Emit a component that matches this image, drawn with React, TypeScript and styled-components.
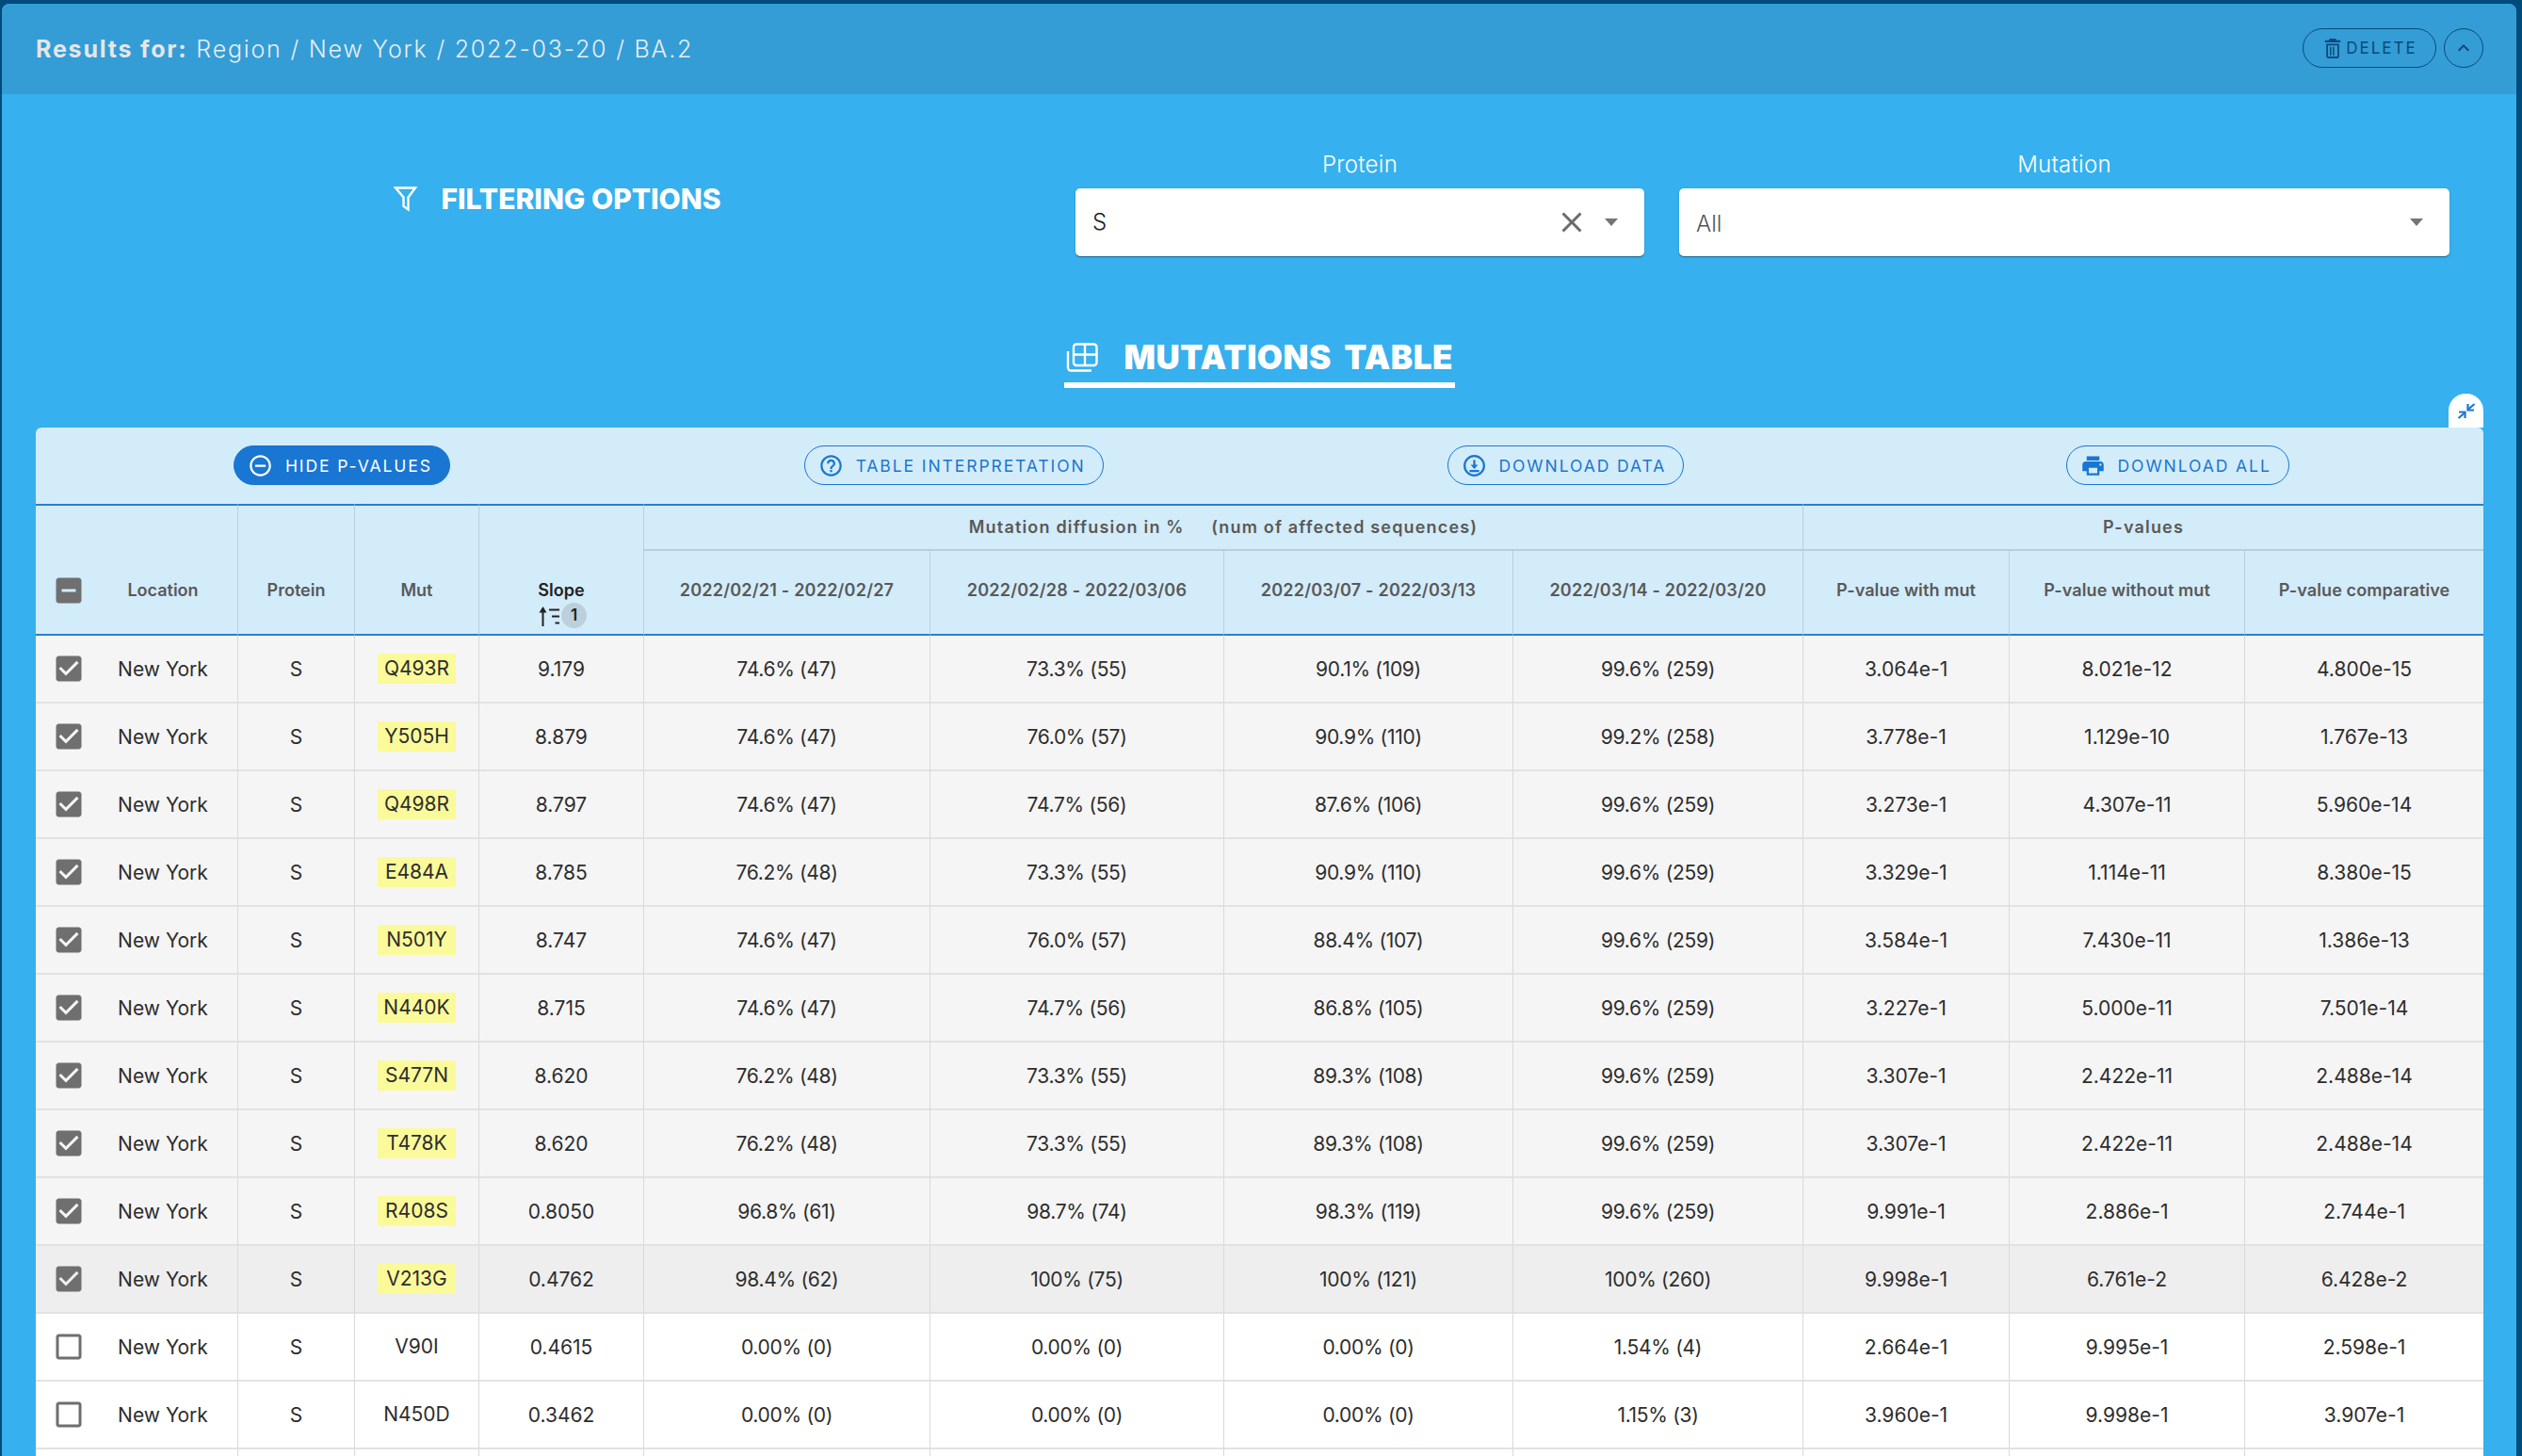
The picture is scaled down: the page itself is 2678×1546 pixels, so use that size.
import React from "react";
import styled, { createGlobalStyle } from "styled-components";

const Global = createGlobalStyle`
  html, body { margin: 0; padding: 0; height: 1546px; overflow: hidden; background: #014a7c; }
  #root { height: 1546px; overflow: hidden; }
  * { box-sizing: border-box; }
`;

const Page = styled.div`
  height: 1546px;
  padding: 4px 6px 0 2px;
  background: #014a7c;
  font-family: Inter, "Liberation Sans", sans-serif;
  overflow: hidden;
`;
const Card = styled.section`
  background: #36b0ee;
  border-radius: 8px 8px 0 0;
  height: 1542px;
  overflow: hidden;
`;
const TopBar = styled.header`
  height: 96px;
  background: #349dd6;
  display: flex;
  align-items: center;
  justify-content: space-between;
  padding: 0 35px 0 36px;
`;
const ResultTitle = styled.div`
  font-size: 25px;
  font-weight: 300;
  letter-spacing: 1.8px;
  color: #e9eef1;
  b { font-weight: 700; color: #e6e6e6; }
`;
const TopActions = styled.div`
  display: flex;
  gap: 8px;
  margin-top: -2px;
`;
const DeleteButton = styled.button`
  width: 142px;
  height: 42px;
  border: 1px solid #0a4a78;
  border-radius: 21px;
  background: transparent;
  color: #0a4a78;
  font: 400 17px Inter, sans-serif;
  letter-spacing: 2px;
  display: flex;
  align-items: center;
  justify-content: center;
  gap: 4px;
  padding: 0 0 0 2px;
`;
const RoundButton = styled.button`
  width: 42px;
  height: 42px;
  border: 1px solid #0a4a78;
  border-radius: 50%;
  background: transparent;
  color: #0a4a78;
  display: flex;
  align-items: center;
  justify-content: center;
  padding: 0;
`;
const FilterRow = styled.div`
  display: flex;
  align-items: flex-start;
  padding: 60px 71px 0 36px;
`;
const FilterTitle = styled.div`
  flex: 0 0 1104px;
  height: 102px;
  display: flex;
  align-items: center;
  justify-content: center;
  gap: 24px;
  padding-left: 4px;
  color: #fff;
  font-size: 30px;
  font-weight: 800;
`;
const Field = styled.div<{ $w: number; $ml?: number }>`
  flex: 0 0 ${(p) => p.$w}px;
  margin-left: ${(p) => p.$ml ?? 0}px;
`;
const FieldLabel = styled.div`
  height: 40px;
  line-height: 30px;
  text-align: center;
  color: #fff;
  font-size: 24px;
  font-weight: 300;
  letter-spacing: 0.3px;
`;
const Select = styled.div`
  height: 72px;
  background: #fff;
  border-radius: 5px;
  box-shadow: 0 2px 1px -1px rgba(0,0,0,.2), 0 1px 1px rgba(0,0,0,.14), 0 1px 3px rgba(0,0,0,.12);
  display: flex;
  align-items: center;
  padding: 0 28px 0 18px;
  font-size: 24px;
  color: #6b6b6b;
`;
const SelectValue = styled.span<{ $muted?: boolean }>`
  flex: 1;
  font-weight: 300;
  color: ${(p) => (p.$muted ? "#555" : "#222")};
  margin-top: ${(p) => (p.$muted ? 2 : -2)}px;
`;
const Caret = styled.span<{ $ml?: number }>`
  width: 0;
  height: 0;
  border-left: 7.5px solid transparent;
  border-right: 7.5px solid transparent;
  border-top: 8px solid #757575;
  margin-left: ${(p) => p.$ml ?? 0}px;
`;
const Heading = styled.div`
  width: 415px;
  height: 52px;
  margin: 88px auto 42px;
  padding: 0 0 8px 2px;
  border-bottom: 6px solid #fff;
  display: flex;
  align-items: center;
  gap: 28px;
  color: #fff;
  font-size: 35px;
  font-weight: 900;
  letter-spacing: 0.5px;
  word-spacing: 6px;
  white-space: nowrap;
`;
const TableBox = styled.div`
  position: relative;
  margin: 0 35px 0 36px;
`;
const CollapseTab = styled.div`
  position: absolute;
  right: 0;
  top: -36px;
  width: 37px;
  height: 36px;
  background: #fff;
  border-radius: 18px 18px 0 0;
  color: #1976d2;
  display: flex;
  align-items: center;
  justify-content: center;
`;
const Toolbar = styled.div`
  height: 81px;
  background: #d3ecfa;
  border-radius: 6px 6px 0 0;
  display: grid;
  grid-template-columns: repeat(4, 1fr);
  align-items: center;
  justify-items: center;
  padding-bottom: 1px;
`;
const ToolButton = styled.button<{ $solid?: boolean }>`
  height: 42px;
  border-radius: 21px;
  border: 1px solid #1976d2;
  background: ${(p) => (p.$solid ? "#1976d2" : "transparent")};
  color: ${(p) => (p.$solid ? "#fff" : "#1976d2")};
  font: 400 17.5px Inter, sans-serif;
  letter-spacing: 1.92px;
  display: flex;
  align-items: center;
  gap: 13px;
  padding: 0 18px 0 14px;
  white-space: nowrap;
`;
const Table = styled.table`
  width: 2599px;
  table-layout: fixed;
  border-collapse: separate;
  border-spacing: 0;
`;
const Th = styled.th<{ $active?: boolean; $ls?: number }>`
  background: #d3ecfa;
  color: ${(p) => (p.$active ? "#222" : "#595959")};
  font-size: 18px;
  font-weight: 600;
  line-height: 24px;
  letter-spacing: ${(p) => p.$ls ?? 0}px;
  text-align: center;
  vertical-align: top;
  padding: 30px 0 0;
  border-right: 1px solid #b8cfde;
  &:last-child { border-right: 0; }
`;
const SpanTh = styled(Th)`
  padding-top: 78px;
  border-top: 2px solid #2a7fd0;
  border-bottom: 2px solid #2a7fd0;
`;
const GroupTh = styled(Th)`
  height: 50px;
  padding: 0;
  vertical-align: middle;
  border-top: 2px solid #2a7fd0;
  border-bottom: 2px solid #b8cfde;
  letter-spacing: 1.18px;
  white-space: pre;
`;
const SubTh = styled(Th)`
  height: 90px;
  padding-top: 30px;
  border-bottom: 2px solid #2a7fd0;
`;
const SelectTh = styled(SpanTh)`
  border-right: 0;
  text-align: left;
  padding: 72px 0 0 17px;
`;
const SortLine = styled.div`
  height: 27px;
  display: flex;
  align-items: center;
  justify-content: center;
  margin-top: 1px;
  padding-left: 2px;
`;
const SortBadge = styled.span`
  width: 27px;
  height: 27px;
  border-radius: 50%;
  background: #bcd0dc;
  font-size: 17px;
  line-height: 27px;
  color: #222;
  margin-left: 1px;
`;
const Row = styled.tr<{ $tone: "sel" | "hover" | "plain" }>`
  background: ${(p) => (p.$tone === "sel" ? "#f5f5f5" : p.$tone === "hover" ? "#eeeeee" : "#fff")};
`;
const Td = styled.td`
  height: 72px;
  padding: 0;
  text-align: center;
  vertical-align: middle;
  font-size: 21px;
  font-weight: 400;
  color: #2d2d2d;
  border-right: 1px solid #d9d9d9;
  border-bottom: 2px solid #e2e2e2;
  &:last-child { border-right: 0; }
`;
const PercentTd = styled(Td)`
  letter-spacing: -0.3px;
`;
const CheckTd = styled(Td)`
  border-right: 0;
  text-align: left;
  padding-left: 17px;
  line-height: 0;
`;
const Highlight = styled.span<{ $on: boolean }>`
  display: inline-block;
  min-width: 83px;
  height: 32px;
  line-height: 32px;
  background: ${(p) => (p.$on ? "#fbfa9a" : "transparent")};
`;

const Ico = ({ d, size = 24 }: { d: string; size?: number }) => (
  <svg width={size} height={size} viewBox="0 0 24 24" fill="currentColor" aria-hidden>
    <path d={d} />
  </svg>
);

const CHECKED = "M19 3H5c-1.11 0-2 .9-2 2v14c0 1.1.89 2 2 2h14c1.11 0 2-.89 2-2V5c0-1.1-.89-2-2-2zm-9 14l-5-5 1.41-1.41L10 14.17l7.59-7.59L19 8l-9 9z";
const BLANK = "M19 5v14H5V5h14m0-2H5c-1.1 0-2 .9-2 2v14c0 1.1.9 2 2 2h14c1.1 0 2-.9 2-2V5c0-1.1-.9-2-2-2z";
const INDET = "M19 3H5c-1.1 0-2 .9-2 2v14c0 1.1.9 2 2 2h14c1.1 0 2-.9 2-2V5c0-1.1-.9-2-2-2zm-2 10H7v-2h10v2z";
const CheckIcon = styled.span`
  display: inline-block;
  color: #6f6f6f;
  line-height: 0;
`;
const Check = ({ d }: { d: string }) => (
  <CheckIcon>
    <Ico d={d} size={36} />
  </CheckIcon>
);

const FunnelIcon = () => (
  <svg width="26" height="28" viewBox="0 0 26 28" fill="none" stroke="#fff" strokeWidth="2.4" aria-hidden>
    <path d="M2 2.500h21l-7.500 10v13l-5-3.500v-9.500z" />
  </svg>
);
const TableIcon = () => (
  <svg width="34" height="31" viewBox="0 0 34 31" fill="none" stroke="#fff" strokeWidth="2.4" aria-hidden>
    <rect x="8" y="1.500" width="24.500" height="22.500" rx="3" />
    <path d="M8 12.500h24.500M20 1.500v22.500" />
    <path d="M2 9v17.500a3 3 0 0 0 3 3h22" />
  </svg>
);
const DownloadIcon = () => (
  <svg width="27" height="27" viewBox="0 0 24 24" fill="none" stroke="currentColor" strokeWidth="2" aria-hidden>
    <circle cx="12" cy="12" r="9.200" />
    <path d="M12 6.500v7" />
    <path d="M8.500 11h7L12 15z" fill="currentColor" stroke="none" />
    <path d="M7.500 17h9" />
  </svg>
);
const SortIcon = () => (
  <svg width="24" height="24" viewBox="0 0 24 24" fill="none" stroke="#222" aria-hidden>
    <path d="M5.500 23V4" strokeWidth="2" />
    <path d="M1.500 8.500 5.500 2l4 6.500z" fill="#222" stroke="none" />
    <path d="M12 5.500h11" strokeWidth="2" />
    <path d="M15 12.500h8" strokeWidth="2" />
    <path d="M18.500 19.500h4.500" strokeWidth="2" />
  </svg>
);
const CollapseIcon = () => (
  <svg width="20" height="17" viewBox="0 0 20 17" fill="none" stroke="currentColor" strokeWidth="2.2" aria-hidden>
    <path d="M18.500 1 12 6.500" />
    <path d="M11.500 1v6.500H18" />
    <path d="M1.500 16 8 10.500" />
    <path d="M2 9.500h6.500V16" />
  </svg>
);

type R = [string, string, string[], string[], boolean, "sel" | "hover" | "plain"];
const rows: R[] = [
  ["Q493R", "9.179", ["74.6% (47)", "73.3% (55)", "90.1% (109)", "99.6% (259)"], ["3.064e-1", "8.021e-12", "4.800e-15"], true, "sel"],
  ["Y505H", "8.879", ["74.6% (47)", "76.0% (57)", "90.9% (110)", "99.2% (258)"], ["3.778e-1", "1.129e-10", "1.767e-13"], true, "sel"],
  ["Q498R", "8.797", ["74.6% (47)", "74.7% (56)", "87.6% (106)", "99.6% (259)"], ["3.273e-1", "4.307e-11", "5.960e-14"], true, "sel"],
  ["E484A", "8.785", ["76.2% (48)", "73.3% (55)", "90.9% (110)", "99.6% (259)"], ["3.329e-1", "1.114e-11", "8.380e-15"], true, "sel"],
  ["N501Y", "8.747", ["74.6% (47)", "76.0% (57)", "88.4% (107)", "99.6% (259)"], ["3.584e-1", "7.430e-11", "1.386e-13"], true, "sel"],
  ["N440K", "8.715", ["74.6% (47)", "74.7% (56)", "86.8% (105)", "99.6% (259)"], ["3.227e-1", "5.000e-11", "7.501e-14"], true, "sel"],
  ["S477N", "8.620", ["76.2% (48)", "73.3% (55)", "89.3% (108)", "99.6% (259)"], ["3.307e-1", "2.422e-11", "2.488e-14"], true, "sel"],
  ["T478K", "8.620", ["76.2% (48)", "73.3% (55)", "89.3% (108)", "99.6% (259)"], ["3.307e-1", "2.422e-11", "2.488e-14"], true, "sel"],
  ["R408S", "0.8050", ["96.8% (61)", "98.7% (74)", "98.3% (119)", "99.6% (259)"], ["9.991e-1", "2.886e-1", "2.744e-1"], true, "sel"],
  ["V213G", "0.4762", ["98.4% (62)", "100% (75)", "100% (121)", "100% (260)"], ["9.998e-1", "6.761e-2", "6.428e-2"], true, "hover"],
  ["V90I", "0.4615", ["0.00% (0)", "0.00% (0)", "0.00% (0)", "1.54% (4)"], ["2.664e-1", "9.995e-1", "2.598e-1"], false, "plain"],
  ["N450D", "0.3462", ["0.00% (0)", "0.00% (0)", "0.00% (0)", "1.15% (3)"], ["3.960e-1", "9.998e-1", "3.907e-1"], false, "plain"],
];
const widths = [56, 159, 124, 132, 175, 304, 312, 307, 308, 219, 250, 253];
const dates = ["2022/02/21 - 2022/02/27", "2022/02/28 - 2022/03/06", "2022/03/07 - 2022/03/13", "2022/03/14 - 2022/03/20"];
const pvalues = ["P-value with mut", "P-value without mut", "P-value comparative"];

export default function App() {
  return (
    <Page>
      <Global />
      <Card>
        <TopBar>
          <ResultTitle>
            <b>Results for:</b> Region / New York / 2022-03-20 / BA.2
          </ResultTitle>
          <TopActions>
            <DeleteButton>
              <svg width="20" height="22" viewBox="0 0 22 24" fill="currentColor" aria-hidden>
                <path d="M7.500 1h7l1 2H20v2.500H2V3h4.500zM3.500 7h15v15a2 2 0 0 1-2 2h-11a2 2 0 0 1-2-2zm2 2v13h11V9zm2.200 1.500h1.600v10H7.700zm3.500 0h1.600v10h-1.600z" />
              </svg>
              DELETE
            </DeleteButton>
            <RoundButton>
              <Ico size={24} d="M12 8l-6 6 1.410 1.410L12 10.830l4.590 4.580L18 14z" />
            </RoundButton>
          </TopActions>
        </TopBar>

        <FilterRow>
          <FilterTitle>
            <FunnelIcon />
            FILTERING OPTIONS
          </FilterTitle>
          <Field $w={604}>
            <FieldLabel>Protein</FieldLabel>
            <Select>
              <SelectValue>S</SelectValue>
              <Ico size={36} d="M19 6.410 17.590 5 12 10.590 6.410 5 5 6.410 10.590 12 5 17.590 6.410 19 12 13.410 17.590 19 19 17.590 13.410 12z" />
              <Caret $ml={17} />
            </Select>
          </Field>
          <Field $w={818} $ml={37}>
            <FieldLabel>Mutation</FieldLabel>
            <Select>
              <SelectValue $muted>All</SelectValue>
              <Caret />
            </Select>
          </Field>
        </FilterRow>

        <Heading>
          <TableIcon />
          MUTATIONS TABLE
        </Heading>

        <TableBox>
          <CollapseTab>
            <CollapseIcon />
          </CollapseTab>
          <Toolbar>
            <ToolButton $solid>
              <Ico size={27} d="M7 11v2h10v-2H7zm5-9C6.480 2 2 6.480 2 12s4.480 10 10 10 10-4.480 10-10S17.520 2 12 2zm0 18c-4.410 0-8-3.590-8-8s3.590-8 8-8 8 3.590 8 8-3.590 8-8 8z" />
              HIDE P-VALUES
            </ToolButton>
            <ToolButton>
              <Ico size={27} d="M11 18h2v-2h-2v2zm1-16C6.480 2 2 6.480 2 12s4.480 10 10 10 10-4.480 10-10S17.520 2 12 2zm0 18c-4.410 0-8-3.590-8-8s3.590-8 8-8 8 3.590 8 8-3.590 8-8 8zm0-14c-2.210 0-4 1.790-4 4h2c0-1.100.9-2 2-2s2 .9 2 2c0 2-3 1.750-3 5h2c0-2.250 3-2.500 3-5 0-2.210-1.790-4-4-4z" />
              TABLE INTERPRETATION
            </ToolButton>
            <ToolButton>
              <DownloadIcon />
              DOWNLOAD DATA
            </ToolButton>
            <ToolButton>
              <Ico size={27} d="M19 8H5c-1.660 0-3 1.340-3 3v6h4v4h12v-4h4v-6c0-1.660-1.340-3-3-3zm-3 11H8v-5h8v5zm3-7c-.55 0-1-.45-1-1s.45-1 1-1 1 .45 1 1-.45 1-1 1zm-1-9H6v4h12V3z" />
              DOWNLOAD ALL
            </ToolButton>
          </Toolbar>
          <Table>
            <colgroup>
              {widths.map((w, i) => (
                <col key={i} style={{ width: w }} />
              ))}
            </colgroup>
            <thead>
              <tr>
                <SelectTh rowSpan={2}>
                  <Check d={INDET} />
                </SelectTh>
                <SpanTh rowSpan={2}>Location</SpanTh>
                <SpanTh rowSpan={2}>Protein</SpanTh>
                <SpanTh rowSpan={2}>Mut</SpanTh>
                <SpanTh rowSpan={2} $active>
                  Slope
                  <SortLine>
                    <SortIcon />
                    <SortBadge>1</SortBadge>
                  </SortLine>
                </SpanTh>
                <GroupTh colSpan={4}>{"Mutation diffusion in %     (num of affected sequences)"}</GroupTh>
                <GroupTh colSpan={3}>P-values</GroupTh>
              </tr>
              <tr>
                {dates.map((d) => (
                  <SubTh key={d} $ls={0.22}>{d}</SubTh>
                ))}
                {pvalues.map((d) => (
                  <SubTh key={d} $ls={0.1}>{d}</SubTh>
                ))}
              </tr>
            </thead>
            <tbody>
              {rows.map(([mut, slope, pcts, ps, on, tone]) => (
                <Row key={mut} $tone={tone}>
                  <CheckTd>
                    <Check d={on ? CHECKED : BLANK} />
                  </CheckTd>
                  <Td>New York</Td>
                  <Td>S</Td>
                  <Td>
                    <Highlight $on={on}>{mut}</Highlight>
                  </Td>
                  <Td>{slope}</Td>
                  {pcts.map((v, i) => (
                    <PercentTd key={i}>{v}</PercentTd>
                  ))}
                  {ps.map((v, i) => (
                    <Td key={i}>{v}</Td>
                  ))}
                </Row>
              ))}
              <Row $tone="plain">
                <CheckTd />
                {widths.slice(1).map((w, i) => (
                  <Td key={i} />
                ))}
              </Row>
            </tbody>
          </Table>
        </TableBox>
      </Card>
    </Page>
  );
}
